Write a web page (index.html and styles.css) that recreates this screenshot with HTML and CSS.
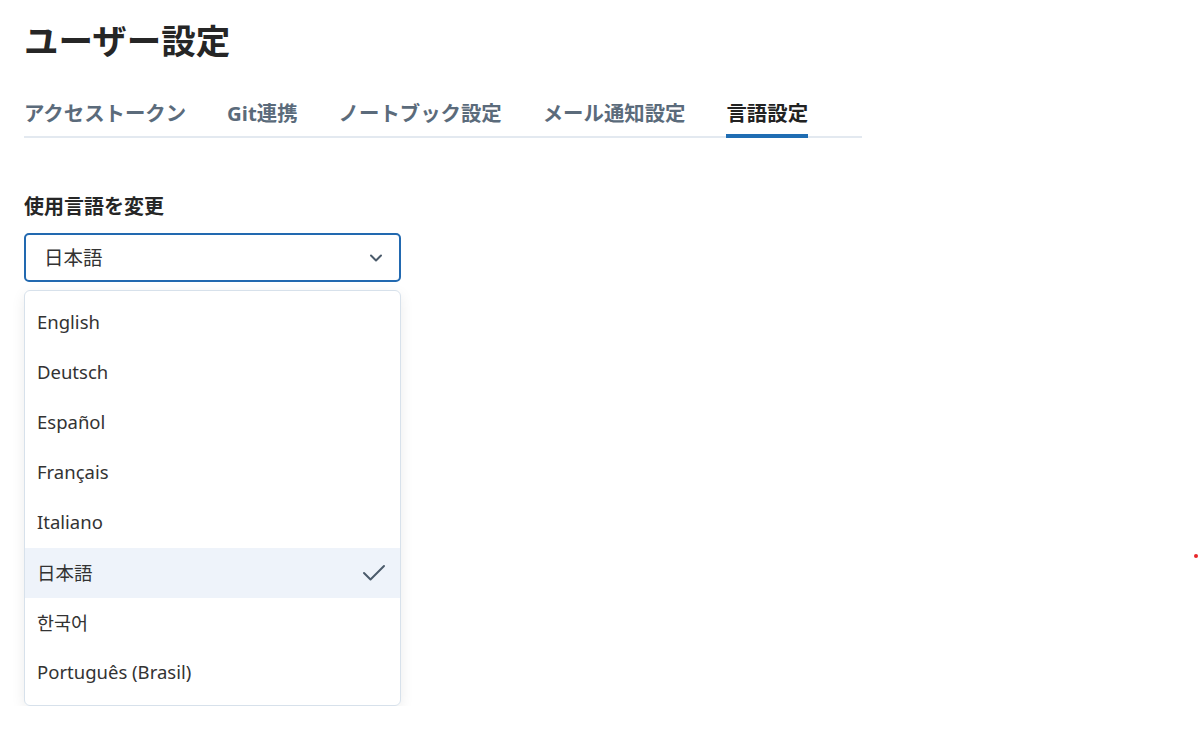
FILE: index.html
```html
<!DOCTYPE html>
<html lang="ja">
<head>
    <meta charset="UTF-8">
    <meta name="viewport" content="width=device-width, initial-scale=1.0">
    <title>ユーザー設定</title>
    <link rel="stylesheet" href="styles.css">
</head>
<body>
    <div class="page">
        <h1>ユーザー設定</h1>
        <nav class="tabs">
            <a class="tab">アクセストークン</a>
            <a class="tab">Git連携</a>
            <a class="tab">ノートブック設定</a>
            <a class="tab">メール通知設定</a>
            <a class="tab active">言語設定</a>
        </nav>

        <div class="field">
            <label class="label">使用言語を変更</label>
            <div class="select">
                <span>日本語</span>
                <svg class="chevron" width="14" height="10" viewBox="0 0 14 10">
                    <path d="M2 2.5 L7 7.5 L12 2.5" fill="none" stroke="#4b5b6b" stroke-width="2" stroke-linecap="round" stroke-linejoin="round"/>
                </svg>
            </div>
            <ul class="options">
                <li>English</li>
                <li>Deutsch</li>
                <li>Español</li>
                <li>Français</li>
                <li>Italiano</li>
                <li class="selected">日本語
                    <svg class="check" width="26" height="20" viewBox="0 0 26 20">
                        <path d="M3 10 L9.5 16.5 L23 3" fill="none" stroke="#4b5b6b" stroke-width="2" stroke-linecap="round" stroke-linejoin="round"/>
                    </svg>
                </li>
                <li lang="ko">한국어</li>
                <li>Português (Brasil)</li>
            </ul>
        </div>
    </div>
    <span class="dot"></span>
</body>
</html>
```

FILE: styles.css
```css
body {
    font-family: "Noto Sans", "Noto Sans CJK JP", "Noto Sans CJK KR", sans-serif;
    margin: 0;
    padding: 0;
    color: #2b2b2b;
    background-color: #fff;
}
.page {
    padding: 20px 24px 0;
}
h1 {
    font-size: 34.5px;
    line-height: 42px;
    font-weight: 700;
    margin: 0 0 37px;
    color: #262626;
}
.tabs {
    display: flex;
    gap: 41px;
    width: 838px;
    border-bottom: 2px solid #e3e9f0;
}
.tab {
    font-size: 20.4px;
    line-height: 28px;
    font-weight: 700;
    color: #5b6b7b;
    padding-bottom: 7px;
    border-bottom: 4px solid transparent;
    margin-bottom: -2px;
}
.tab.active {
    color: #222;
    border-bottom-color: #1f6db3;
}
.field {
    margin-top: 55px;
    width: 377px;
}
.label {
    display: block;
    font-size: 20px;
    line-height: 28px;
    font-weight: 700;
    color: #262626;
}
.select {
    margin-top: 12px;
    height: 45px;
    border: 2px solid #2269b0;
    border-radius: 5px;
    display: flex;
    align-items: center;
    justify-content: space-between;
    padding: 0 16px 0 18px;
    font-size: 19.5px;
    color: #333;
}
.select span {
    margin-top: -3px;
}
.options {
    list-style-type: none;
    margin: 8px 0 0;
    padding: 7px 0 7px;
    border: 1px solid #d7e1eb;
    border-radius: 6px;
    box-shadow: 0 4px 14px rgba(0, 0, 0, 0.08);
}
.options li {
    box-sizing: border-box;
    height: 50px;
    display: flex;
    align-items: center;
    justify-content: space-between;
    padding: 0 13px 3px 12px;
    font-size: 18.5px;
    color: #333;
}
.options li.selected {
    background-color: #eef3fa;
}
.check {
    margin-top: 3px;
}
.dot {
    position: absolute;
    left: 1194px;
    top: 554px;
    width: 4px;
    height: 4px;
    border-radius: 50%;
    background-color: #e8262a;
}
```
